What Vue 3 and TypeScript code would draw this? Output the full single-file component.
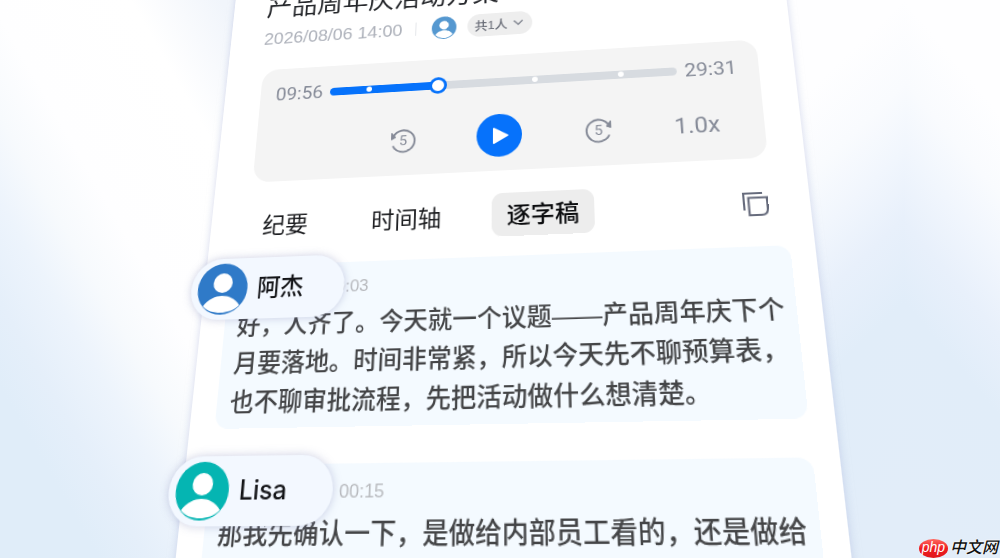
<script setup lang="ts">
import { computed, ref } from 'vue'

interface Entry {
  name: string
  time: string
  tone: string
  text: string
}

const tabs = ['纪要', '时间轴', '逐字稿']
const activeTab = ref('逐字稿')
const position = ref(312)
const marks = [11.7, 60, 84.5]

// The thumb is 19px wide, so the fill ends at its centre.
const trackStyle = computed(() => {
  const p = position.value / 1000
  return { '--fill': `calc(${p * 100}% + ${Math.round((0.5 - p) * 19)}px)` }
})

const entries: Entry[] = [
  {
    name: '阿杰',
    time: '00:03',
    tone: 'blue',
    text: '好，人齐了。今天就一个议题——产品周年庆下个月要落地。时间非常紧，所以今天先不聊预算表，也不聊审批流程，先把活动做什么想清楚。',
  },
  {
    name: 'Lisa',
    time: '00:15',
    tone: 'teal',
    text: '那我先确认一下，是做给内部员工看的，还是做给',
  },
]
</script>

<template>
  <div class="scene">
    <main class="sheet">
      <h1 class="title">产品周年庆活动方案</h1>
      <div class="meta">
        <time class="date">2026/08/06 14:00</time>
        <span class="divider"></span>
        <svg class="mini-avatar" viewBox="0 0 52 52" aria-hidden="true">
          <circle cx="26" cy="26" r="26" fill="#5598d0" />
          <circle cx="26" cy="20" r="10" fill="#fff" />
          <path d="M8 42C12 35 19 32 26 32s14 3 18 10c-5 5-11 8-18 8S13 47 8 42Z" fill="#fff" />
        </svg>
        <button type="button" class="people">
          共1人
          <svg viewBox="0 0 12 12" aria-hidden="true"><path d="M2 4l4 4 4-4" /></svg>
        </button>
      </div>

      <section class="player" aria-label="播放器">
        <div class="progress">
          <span>09:56</span>
          <div class="track" :style="trackStyle">
            <input v-model.number="position" type="range" min="0" max="1000" aria-label="播放进度" />
            <i v-for="m in marks" :key="m" class="mark" :style="{ left: m + '%' }"></i>
          </div>
          <span>29:31</span>
        </div>
        <div class="controls">
          <button type="button" class="skip" aria-label="后退5秒">
            <svg viewBox="0 0 28 28" aria-hidden="true">
              <path d="M3.2 19.4A12 12 0 1 0 3.4 9" />
              <path class="head" d="M1.6 5v7.5L6 10Z" />
              <text x="14" y="19">5</text>
            </svg>
          </button>
          <button type="button" class="play" aria-label="播放">
            <svg viewBox="0 0 24 24" aria-hidden="true">
              <path d="M6 4v16l14-8Z" />
            </svg>
          </button>
          <button type="button" class="skip" aria-label="前进5秒">
            <svg viewBox="0 0 28 28" aria-hidden="true">
              <path d="M24.8 19.4A12 12 0 1 1 24.6 9" />
              <path class="head" d="M26.4 4v7.5L22 10Z" />
              <text x="14" y="19">5</text>
            </svg>
          </button>
          <button type="button" class="speed">1.0x</button>
        </div>
      </section>

      <nav class="tabs">
        <button
          v-for="tab in tabs"
          :key="tab"
          type="button"
          class="tab"
          :class="{ active: tab === activeTab }"
          @click="activeTab = tab"
        >{{ tab }}</button>
        <button type="button" class="copy" aria-label="复制">
          <svg viewBox="0 0 24 24" aria-hidden="true">
            <path d="M1 18V1h18" />
            <path d="M5.5 5.5H23V17q0 6-6 6H5.5Z" />
          </svg>
        </button>
      </nav>

      <section class="entries">
        <article v-for="e in entries" :key="e.name" class="entry" :class="e.tone">
          <div class="speaker">
            <svg viewBox="0 0 52 52" aria-hidden="true">
              <circle class="disc" cx="26" cy="26" r="26" />
              <circle cx="26" cy="20" r="10" fill="#fff" />
              <path d="M7 43C12 36 19 33 26 33s14 3 19 10c-5 5-12 7-19 7S12 48 7 43Z" fill="#fff" />
            </svg>
            <strong>{{ e.name }}</strong>
          </div>
          <time class="stamp">{{ e.time }}</time>
          <p>{{ e.text }}</p>
        </article>
      </section>
    </main>

    <div class="brand">
      <span class="oval">php</span>
      <span class="word">中文网</span>
    </div>
  </div>
</template>

<style>
body {
  margin: 0;
  overflow: hidden;
}
</style>

<style scoped>
.scene {
  position: relative;
  height: 100vh;
  overflow: hidden;
  font-family: "Liberation Sans", "Noto Sans CJK SC", sans-serif;
  background:
    linear-gradient(60deg, #e0edf9 12%, #e5effa 18%, #edf4fc 25%, #f7fafd 31%, #fefeff 38%, #fff 55%, #f1f5fb 66%) left / 50% 100% no-repeat,
    linear-gradient(230deg, #fefeff 17%, #f9fbfe 29%, #f1f6fd 39%, #e8f0fb 50%, #e1edf9 62%, #e2edf9 92%) right / 9.5% 100% no-repeat,
    linear-gradient(136deg, #fefeff 41%, #f9fbfe 50%, #f1f6fd 57%, #e8f0fb 64%, #e1edf9 73%, #e2edf9 94%) 84% 0 / 40.5% 100% no-repeat,
    #f4f8fd;
}

button {
  padding: 0;
  border: 0;
  background: none;
  font: inherit;
  color: inherit;
}

svg {
  display: block;
}

/* The sheet lies tilted in the scene: one projective plane for all its content. */
.sheet {
  box-sizing: border-box;
  width: 60%;
  min-height: 760px;
  margin: -40px 0 0 24%;
  padding: 46px 23px 0 25px;
  background: #fff;
  box-shadow: 0 0 8px rgba(150, 160, 205, 0.4);
  transform-origin: 0 0;
  transform: matrix3d(0.83811, -0.0644, 0, -0.00010645, -0.08144, 0.75746, 0, -0.000313, 0, 0, 1, 0, 0, 0, 0, 1);
}

.title {
  margin: 0 0 4px 13px;
  font-size: 29px;
  line-height: 40px;
  font-weight: 400;
  color: #26282c;
}

.meta {
  display: flex;
  align-items: center;
  height: 28px;
  margin-left: 13px;
}

.date {
  font-size: 20px;
  color: #adb1ba;
}

.divider {
  width: 1px;
  height: 16px;
  margin: 0 17px 0 14px;
  background: #e2e4e8;
}

.mini-avatar {
  width: 27px;
  height: 27px;
}

.people {
  display: flex;
  align-items: center;
  gap: 4px;
  height: 27px;
  margin-left: 12px;
  padding: 0 8px;
  border-radius: 14px;
  background: #eee;
  font-size: 14px;
  font-weight: 500;
  color: #6a6e78;
}

.people svg {
  width: 14px;
  height: 14px;
  fill: none;
  stroke: #8a8e98;
  stroke-width: 1.5;
}

.player {
  margin: 24px 12px 0 15px;
  padding: 15px 22px 15px 17px;
  border-radius: 18px;
  background: #f4f4f4;
  color: #868b98;
  font-family: Roboto, "Noto Sans", sans-serif;
}

.progress {
  display: flex;
  align-items: center;
  gap: 8px;
  height: 30px;
  margin-bottom: 22px;
  font-size: 21px;
}

.track {
  position: relative;
  flex: 1;
  display: flex;
  align-items: center;
}

.track input {
  appearance: none;
  width: 100%;
  height: 9px;
  margin: 0;
  border-radius: 5px;
  background: linear-gradient(90deg, #0672fb var(--fill), #d7dbe0 var(--fill));
}

.track input::-webkit-slider-thumb {
  appearance: none;
  position: relative;
  z-index: 1;
  box-sizing: border-box;
  width: 19px;
  height: 19px;
  border: 3px solid #0672fb;
  border-radius: 50%;
  background: #fff;
}

.mark {
  position: absolute;
  width: 6px;
  height: 6px;
  margin-left: -3px;
  border-radius: 50%;
  background: #fff;
  pointer-events: none;
}

.controls {
  display: grid;
  grid-template-columns: repeat(5, 1fr);
  align-items: center;
  justify-items: center;
  margin: 0 -10px;
}

.controls .skip:first-child {
  grid-column: 2;
}

.skip svg {
  width: 28px;
  height: 28px;
  overflow: visible;
  fill: none;
  stroke: #868b98;
  stroke-width: 2;
}

.skip .head {
  fill: #868b98;
  stroke-width: 1;
}

.skip text {
  font-size: 15px;
  text-anchor: middle;
  fill: #868b98;
  stroke: none;
}

.play {
  display: grid;
  place-items: center;
  width: 47px;
  height: 47px;
  border-radius: 50%;
  background: #0672fb;
}

.play svg {
  width: 24px;
  height: 24px;
  fill: #fff;
  stroke: #fff;
  stroke-width: 2;
  stroke-linejoin: round;
}

.speed {
  padding-right: 6px;
  font-size: 24px;
}

.tabs {
  display: flex;
  align-items: center;
  gap: 36px;
  margin: 24px 16px 20px 15px;
}

.tab {
  height: 45px;
  padding: 0 15px;
  border-radius: 11px;
  font-size: 24px;
  line-height: 47px;
  color: #1b1c1f;
}

.tab.active {
  background: #ededed;
  font-weight: 500;
  color: #0c0d0f;
}

.copy {
  margin-left: auto;
}

.copy svg {
  width: 24px;
  height: 24px;
  fill: none;
  stroke: #666b7c;
  stroke-width: 2;
}

.entries {
  display: flex;
  flex-direction: column;
  gap: 33px;
}

.entry {
  position: relative;
  padding: 8px 10px 6px 13px;
  border-radius: 13px;
  background: #f4faff;
}

.entry:last-child {
  min-height: 180px;
}

.speaker {
  position: absolute;
  top: -8px;
  left: -39px;
  display: flex;
  align-items: center;
  gap: 10px;
  box-sizing: border-box;
  width: 159px;
  height: 62px;
  padding-left: 7px;
  border-radius: 32px;
  background: #f3f8ff;
  box-shadow: 0 0 8px rgba(120, 130, 180, 0.38);
}

.speaker svg {
  width: 52px;
  height: 52px;
}

.speaker strong {
  font-family: Inter, "Noto Sans CJK SC", sans-serif;
  font-size: 24px;
  line-height: 32px;
  font-weight: 500;
  color: #141518;
}

.blue .disc {
  fill: #2f7ac8;
}

.teal .disc {
  fill: #05b5b2;
}

.stamp {
  display: block;
  height: 34px;
  padding-left: 89px;
  font-size: 17px;
  line-height: 34px;
  color: #b8babe;
}

.teal .stamp {
  padding-left: 113px;
}

.entry p {
  margin: 0;
  font-size: 24px;
  line-height: 37px;
  font-weight: 500;
  color: #444547;
}

.brand {
  position: absolute;
  right: 2px;
  bottom: 0;
  display: flex;
  align-items: center;
  gap: 2px;
  height: 20px;
}

.oval {
  width: 29px;
  height: 19px;
  border-radius: 50%;
  background: linear-gradient(180deg, #ff6a62, #ee1c20 50%, #e0181c);
  font-size: 14px;
  line-height: 16px;
  font-style: italic;
  text-align: center;
  color: #fff;
}

.word {
  font-size: 16px;
  line-height: 20px;
  font-style: italic;
  font-weight: 500;
  color: #111;
  text-shadow: 0 0 2px #fff, 0 0 2px #fff;
}
</style>
